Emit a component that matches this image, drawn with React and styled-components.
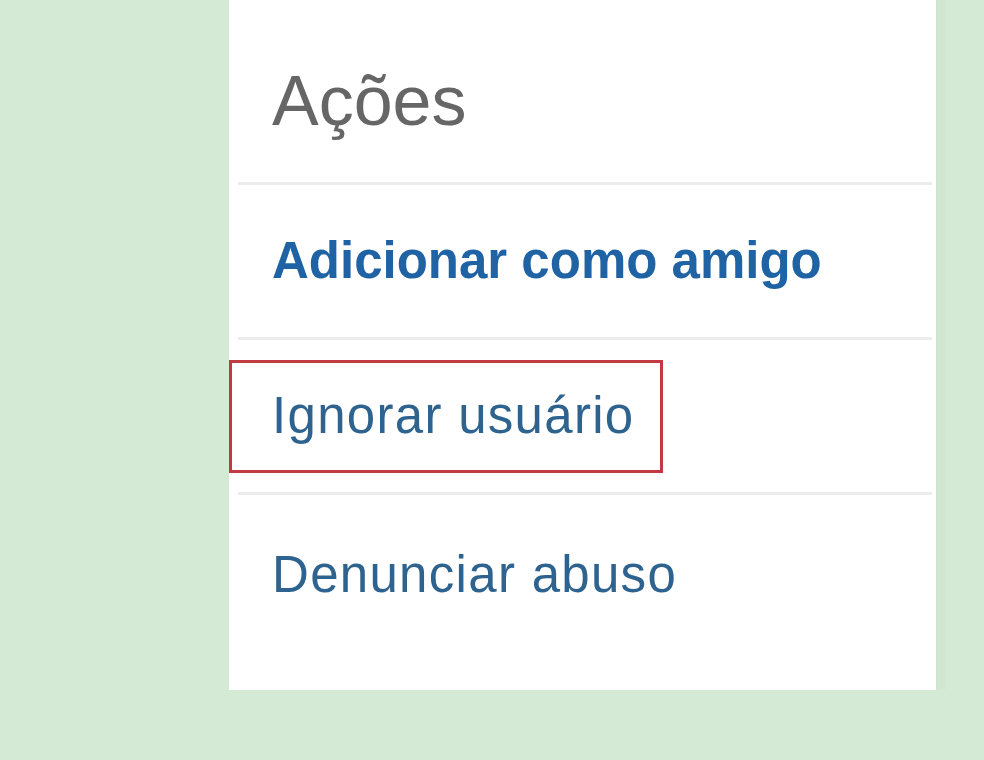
import React from 'react'
import styled, {createGlobalStyle} from 'styled-components'

const GlobalStyle = createGlobalStyle`
  html, body {
    margin: 0;
    padding: 0;
    background: #d4ead5;
  }
  body {
    font-family: "Liberation Sans", Arial, sans-serif;
  }
`;

const Page = styled.div`
  width: 984px;
  height: 760px;
  background: #d4ead5;
  overflow: hidden;
`;

const Panel = styled.div`
  margin-left: 229px;
  width: 707px;
  height: 690px;
  background: #ffffff;
  display: flex;
  flex-direction: column;
  box-shadow: 2px 0 0 #cfe4cf, 10px 0 0 #d1e7d2;
`;

const Header = styled.h2`
  margin: 0;
  height: 182px;
  box-sizing: border-box;
  padding: 66px 0 0 43px;
  font-size: 70px;
  line-height: 70px;
  font-weight: normal;
  color: #666666;
`;

const Item = styled.div`
  position: relative;
  margin: 0 4px 0 9px;
  height: ${p => (p.last ? '195px' : '155px')};
  box-sizing: border-box;
  border-top: 3px solid #ececec;
  padding: ${p => (p.last ? '54px' : '50px')} 0 0 34px;
`;

const Link = styled.a`
  font-size: 51px;
  line-height: 51px;
  font-weight: ${p => (p.bold ? 'bold' : 'normal')};
  letter-spacing: ${p => (p.bold ? '0' : '1.3px')};
  color: ${p => (p.bold ? '#1f63a5' : '#2f638f')};
  text-decoration: none;
  cursor: pointer;
`;

// red annotation box drawn over the second action
const Highlight = styled.div`
  position: absolute;
  top: 20px;
  left: -9px;
  width: 434px;
  height: 113px;
  box-sizing: border-box;
  border: 3px solid #c13a42;
  pointer-events: none;
`;

const actions = [
    {label: 'Adicionar como amigo', bold: true},
    {label: 'Ignorar usuário', marked: true},
    {label: 'Denunciar abuso'},
];

const App = () => {
    return (
        <>
            <GlobalStyle/>
            <Page>
                <Panel>
                    <Header>Ações</Header>
                    {actions.map((action, i) => (
                        <Item key={action.label} last={i === actions.length - 1}>
                            <Link bold={action.bold}>{action.label}</Link>
                            {action.marked && <Highlight/>}
                        </Item>
                    ))}
                </Panel>
            </Page>
        </>
    );
};

export default App;
